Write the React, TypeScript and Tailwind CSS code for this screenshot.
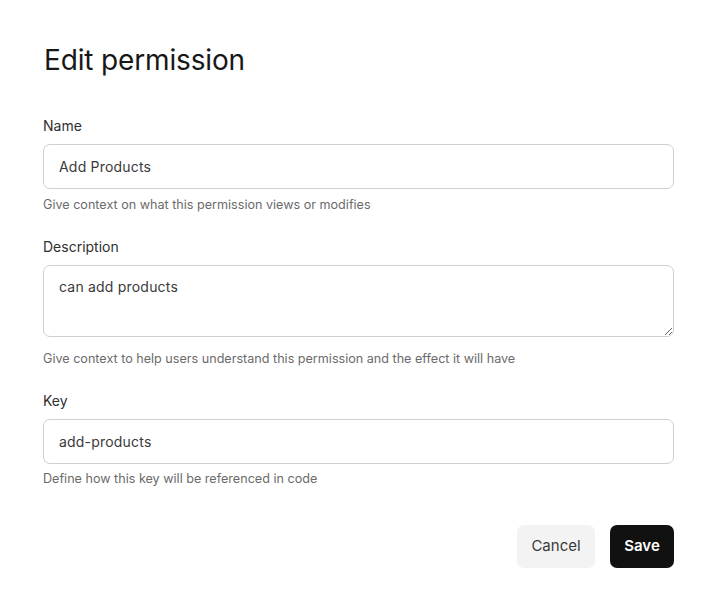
import React from "react";

function Field({
  label,
  help,
  helpGap = "mt-[7px]",
  children,
}: {
  label: string;
  help: string;
  helpGap?: string;
  children: React.ReactNode;
}) {
  return (
    <div className="flex flex-col">
      <label className="text-[14px] leading-5 text-[#2f2f2f]">{label}</label>
      <div className="mt-2">{children}</div>
      <p className={`${helpGap} text-[12.6px] leading-[18px] text-[#6b6b6b]`}>{help}</p>
    </div>
  );
}

export default function App() {
  return (
    <div
      className="min-h-[610px] w-[714px] bg-white"
      style={{ fontFamily: "Inter, 'Liberation Sans', sans-serif" }}
    >
      <div className="ml-[43px] w-[631px] pt-[43px]">
        <h1 className="ml-px text-[28px] font-normal leading-[34px] tracking-[-0.15px] text-[#171717]">
          Edit permission
        </h1>

        <div className="mt-[39px] flex flex-col gap-[23px]">
          <Field label="Name" help="Give context on what this permission views or modifies" helpGap="mt-[7px]">
            <input
              defaultValue="Add Products"
              className="h-[45px] w-full rounded-[7px] border border-[#cfcfcf] pl-[15px] pr-4 text-[14px] tracking-[0.2px] text-[#3a3a3a] outline-none"
            />
          </Field>

          <Field
            label="Description"
            help="Give context to help users understand this permission and the effect it will have"
            helpGap="mt-[13px]"
          >
            <textarea
              defaultValue="can add products"
              className="block h-[72px] w-full resize-y rounded-[7px] border border-[#cfcfcf] pl-[15px] pr-4 pt-[11px] text-[14px] leading-5 tracking-[0.2px] text-[#3a3a3a] outline-none"
            />
          </Field>

          <Field label="Key" help="Define how this key will be referenced in code" helpGap="mt-[6px]">
            <input
              defaultValue="add-products"
              className="h-[45px] w-full rounded-[7px] border border-[#cfcfcf] pl-[15px] pr-4 text-[14px] tracking-[0.2px] text-[#3a3a3a] outline-none"
            />
          </Field>
        </div>

        <div className="mt-[37px] flex justify-end gap-[15px]">
          <button className="h-[43px] w-[78px] rounded-[7px] bg-[#f3f3f3] text-[15px] text-[#3a3a3a]">
            Cancel
          </button>
          <button className="h-[43px] w-[64px] rounded-[7px] bg-[#111111] text-[15px] font-semibold text-white">
            Save
          </button>
        </div>
      </div>
    </div>
  );
}
